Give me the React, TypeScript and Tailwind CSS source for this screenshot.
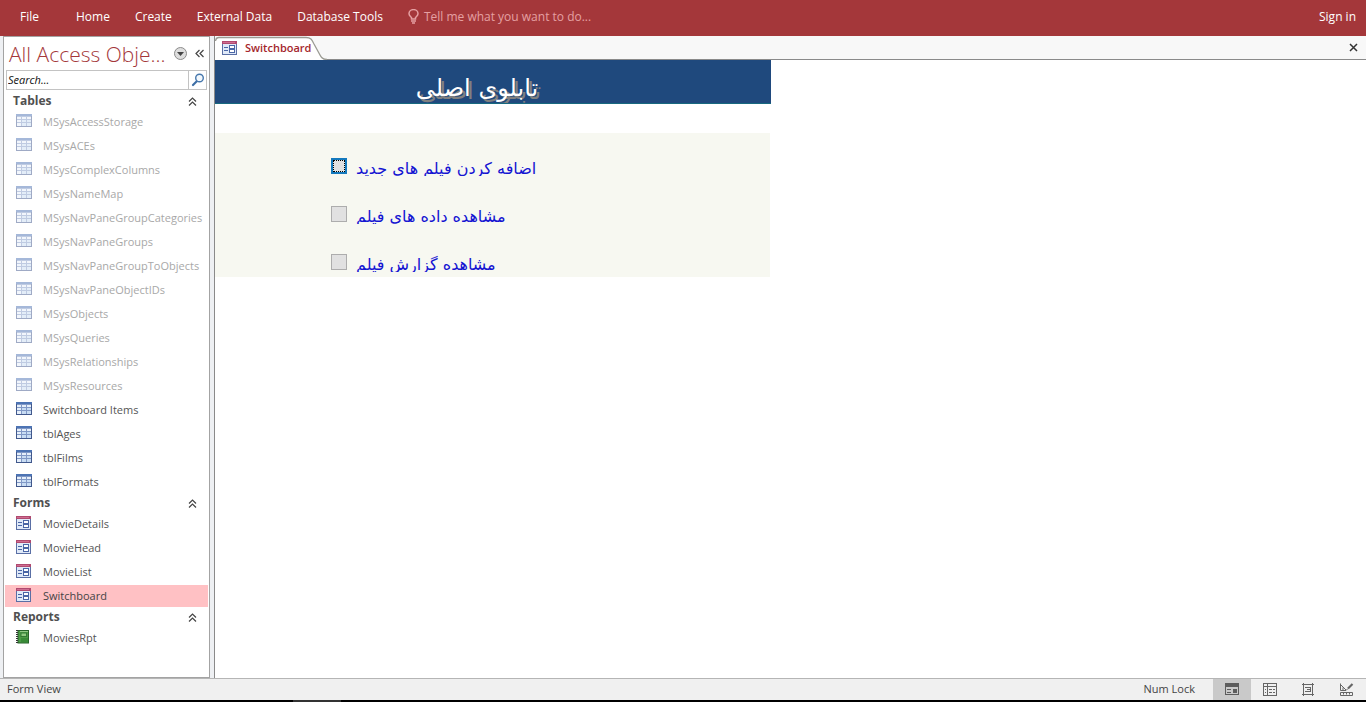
import React from "react";

const UI = "font-['Open_Sans','Noto_Sans',sans-serif]";

function TableIcon({ faded }: { faded?: boolean }) {
  return (
    <svg width="16" height="14" viewBox="0 0 16 14" shapeRendering="crispEdges" className={faded ? "opacity-50" : ""} aria-hidden="true">
      <rect width="16" height="13" fill="#41588c" />
      <rect y="0" width="16" height="2" fill="#4d74b4" />
      <rect x="1" y="2" width="14" height="10" fill="#8098c6" />
      <g fill="#e6effa">
        <rect x="1" y="3" width="4" height="2" />
        <rect x="6" y="3" width="4" height="2" />
        <rect x="11" y="3" width="4" height="2" />
        <rect x="1" y="6" width="4" height="2" />
        <rect x="1" y="9" width="4" height="3" />
      </g>
      <g fill="#c8dcf3">
        <rect x="6" y="6" width="4" height="2" />
        <rect x="11" y="6" width="4" height="2" />
        <rect x="6" y="9" width="4" height="3" />
        <rect x="11" y="9" width="4" height="3" />
      </g>
    </svg>
  );
}

function FormIcon() {
  return (
    <svg width="15" height="14" viewBox="0 0 15 14" shapeRendering="crispEdges" aria-hidden="true">
      <rect width="15" height="14" fill="#5a6fa5" />
      <rect x="1" y="3" width="13" height="10" fill="#dfe9f8" />
      <rect width="15" height="3" fill="#b04a70" />
      <rect x="1" y="1" width="12" height="1" fill="#cf6c90" />
      <g fill="#4a66a6">
        <rect x="2" y="6" width="4" height="1" />
        <rect x="2" y="9" width="4" height="1" />
        <rect x="7" y="4" width="6" height="4" />
        <rect x="7" y="8" width="6" height="4" />
      </g>
      <rect x="8" y="5" width="4" height="2" fill="#fff" />
      <rect x="8" y="9" width="4" height="2" fill="#fff" />
    </svg>
  );
}

function ReportIcon() {
  return (
    <svg width="14" height="14" viewBox="0 0 14 14" aria-hidden="true">
      <rect x="2" y="0.5" width="10.500" height="12.500" fill="#4c9a45" stroke="#27652a" />
      <rect x="4" y="1" width="8" height="1" fill="#91c985" />
      <rect x="5" y="3" width="5.500" height="3.500" fill="#8fca80" stroke="#337a35" />
      <rect x="5" y="8" width="7" height="4" fill="#398b37" />
      <path d="M1 0V14" stroke="#333" strokeWidth="2" strokeDasharray="1 1" />
    </svg>
  );
}

function DoubleUp() {
  return (
    <svg width="9" height="9" viewBox="0 0 9 9" fill="none" stroke="#444" strokeWidth="1.2" aria-hidden="true">
      <path d="M1 4.500 4.500 1 8 4.500M1 8.500 4.500 5 8 8.500" />
    </svg>
  );
}

const tables = [
  "MSysAccessStorage", "MSysACEs", "MSysComplexColumns", "MSysNameMap", "MSysNavPaneGroupCategories",
  "MSysNavPaneGroups", "MSysNavPaneGroupToObjects", "MSysNavPaneObjectIDs", "MSysObjects", "MSysQueries",
  "MSysRelationships", "MSysResources", "Switchboard Items", "tblAges", "tblFilms", "tblFormats",
];

function Group({ title, children }: { title: string; children: React.ReactNode }) {
  return (
    <section>
      <h2>
        <button type="button" className="flex h-[18px] w-full items-center justify-between pl-2 pr-[11px] text-[12px] leading-[18px] font-bold text-[#505050]">
          {title}
          <DoubleUp />
        </button>
      </h2>
      <ul>{children}</ul>
    </section>
  );
}

function Item({ name, icon, faded, selected }: { name: string; icon: React.ReactNode; faded?: boolean; selected?: boolean }) {
  return (
    <li className="flex h-6 items-center">
      <button
        type="button"
        className={`flex h-[22px] w-full items-center gap-[11px] pl-[11px] text-left text-[11px] whitespace-nowrap ${
          selected ? "bg-[#ffc1c4] text-[#444]" : faded ? "text-[#a8a8a8]" : "text-[#555]"
        }`}
      >
        <span className="w-4 shrink-0 pb-[2px]">{icon}</span>
        {name}
      </button>
    </li>
  );
}

function NavPane() {
  return (
    <aside className="flex w-[207px] shrink-0 flex-col overflow-hidden border border-[#a3a3a3] bg-white px-px">
      <div className="flex h-[33px] shrink-0 items-center pl-1 pr-1">
        <h1 className="flex-1 text-[21px] leading-8 font-light whitespace-nowrap text-[#a4373a]">All Access Obje...</h1>
        <button type="button" aria-label="Navigation options" className="mr-2">
          <svg width="13" height="13" viewBox="0 0 13 13">
            <circle cx="6.500" cy="6.500" r="6" fill="#dedede" stroke="#8b8b8b" />
            <path d="M3 5h7l-3.500 4z" fill="#444" />
          </svg>
        </button>
        <button type="button" aria-label="Collapse pane">
          <svg width="9" height="9" viewBox="0 0 9 9" fill="none" stroke="#444" strokeWidth="1.200">
            <path d="M4.500 1 1 4.500 4.500 8M8.500 1 5 4.500 8.500 8" />
          </svg>
        </button>
      </div>
      <form className="mx-px mb-[2px] flex h-5 shrink-0 border border-[#c3c3c3]">
        <input type="text" aria-label="Search" placeholder="Search..." className="min-w-0 flex-1 px-px text-[11px] italic leading-4 outline-none placeholder:text-[#111]" />
        <button type="button" aria-label="Run search" className="flex w-[18px] items-center justify-center border-l border-[#c3c3c3]">
          <svg width="14" height="14" viewBox="0 0 14 14" fill="none">
            <path d="M6 8 2 12" stroke="#3c6da5" strokeWidth="2.200" strokeLinecap="round" />
            <circle cx="8.500" cy="5" r="3.800" fill="#f2f8fd" stroke="#4677ac" strokeWidth="1.400" />
          </svg>
        </button>
      </form>
      <Group title="Tables">
        {tables.map((t) => {
          const faded = t.startsWith("MSys");
          return <Item key={t} name={t} faded={faded} icon={<TableIcon faded={faded} />} />;
        })}
      </Group>
      <Group title="Forms">
        {["MovieDetails", "MovieHead", "MovieList", "Switchboard"].map((f) => (
          <Item key={f} name={f} selected={f === "Switchboard"} icon={<FormIcon />} />
        ))}
      </Group>
      <Group title="Reports">
        <Item name="MoviesRpt" icon={<ReportIcon />} />
      </Group>
    </aside>
  );
}

const options = ["اضافه کردن فیلم های جدید", "مشاهده داده های فیلم", "مشاهده گزارش فیلم"];

function Document() {
  return (
    <main className="flex min-w-0 flex-1 flex-col border-l border-[#8a8a8a] bg-white">
      <div className="flex h-6 shrink-0 items-stretch border-b border-[#8a8a8a] bg-[#f8f8f8]">
        <button type="button" className="relative -mb-px h-6 w-[112px]">
          <svg width="112" height="24" viewBox="0 0 112 24" className="absolute inset-0" aria-hidden="true">
            <path d="M0 24V5Q0 1.500 4 1.500H91C96 1.500 97 4 99 8L105 19Q107 23.500 110 23.500V24Z" fill="#fff" />
            <path d="M0.500 5Q1 1.500 4 1.500H91C96 1.500 97 4 99 8L105 19Q107 23.500 112 23.500" fill="none" stroke="#9b9b93" strokeWidth="1.300" />
          </svg>
          <span className="relative flex items-center gap-2 pl-[7px] text-[11px] font-semibold text-[#a4262c]">
            <FormIcon />
            Switchboard
          </span>
        </button>
        <button type="button" aria-label="Close" className="ml-auto px-2">
          <svg width="9" height="9" viewBox="0 0 9 9" stroke="#333" strokeWidth="1.500">
            <path d="M1 1 8 8M8 1 1 8" />
          </svg>
        </button>
      </div>
      <div className="w-full max-w-[556px]">
        <header className="flex h-11 justify-center overflow-hidden border-b border-[#17697f] bg-[#1f497d] pt-3 pr-8">
          <h2 dir="rtl" lang="fa" className="font-['DejaVu_Sans',sans-serif] text-[24px] leading-8 whitespace-nowrap text-white [text-shadow:3px_3px_0_#808080]">
            تابلوی اصلی
          </h2>
        </header>
        <div className="mt-[29px] mr-px flex h-36 flex-col bg-[#f7f8f1] pl-[116px]">
          {options.map((o, i) => (
            <div key={o} className="flex h-12 items-end pb-[5px]">
              <button
                type="button"
                id={`option-${i}`}
                aria-labelledby={`option-label-${i}`}
                className={`mb-[2px] size-4 shrink-0 bg-[#e1e1e1] ${i === 0 ? "border-2 border-[#1479bd] outline-1 -outline-offset-3 outline-dotted outline-black" : "border border-[#adadad]"}`}
              />
              <label id={`option-label-${i}`} htmlFor={`option-${i}`} dir="rtl" lang="fa" className="ml-[9px] h-5 overflow-hidden font-['DejaVu_Sans',sans-serif] text-[16px] leading-[26px] whitespace-nowrap text-[#1414d2]">
                {o}
              </label>
            </div>
          ))}
        </div>
      </div>
    </main>
  );
}

function StatusBar() {
  const view = "flex h-full w-[38px] items-center justify-center";
  return (
    <footer className="shrink-0">
      <div className="flex h-[22px] items-center border-t border-[#b5b5b5] bg-[#f0f0f0] pr-px pl-[7px] text-[11px] text-[#444]">
        <span>Form View</span>
        <span className="mr-[18px] ml-auto">Num Lock</span>
        <button type="button" aria-label="Form View" className={`${view} bg-[#c9c9c9]`}>
          <svg width="14" height="13" viewBox="0 0 14 13" fill="none" stroke="#5c5c5c" shapeRendering="crispEdges">
            <rect x="0.500" y="0.500" width="13" height="11" />
            <path d="M0 2h14" strokeWidth="4" />
            <path d="M2 6.500h4M2 9.500h4" strokeWidth="1" />
            <path d="M8 6.500h4M8 9h4" strokeWidth="2" />
          </svg>
        </button>
        <button type="button" aria-label="Datasheet View" className={view}>
          <svg width="14" height="13" viewBox="0 0 14 13" fill="none" stroke="#666" shapeRendering="crispEdges">
            <path d="M.5.5h13v12H.5zM0 3.500h14M4.500 0v13M2 6.500h1M2 9.500h1M6 6.500h3M10 6.500h2M6 9.500h3M10 9.500h2" />
          </svg>
        </button>
        <button type="button" aria-label="Layout View" className={view}>
          <svg width="12" height="13" viewBox="0 0 12 13" fill="none" stroke="#666" shapeRendering="crispEdges">
            <path d="M0 1.500h12M0 11.500h12M1.500 0v13M10.500 0v13M3 4.500h6M5 6.500h4M3 8.500h6M8.500 4v5" />
          </svg>
        </button>
        <button type="button" aria-label="Design View" className={view}>
          <svg width="15" height="14" viewBox="0 0 15 14" fill="none" stroke="#666">
            <path d="M1.500 0.500V7.500H7M1.500 1.500 7 7M4 4.500v3" />
            <path d="M13.500 1 9 5.500" strokeWidth="2.200" />
            <path d="M9 5.500 7 7.500" />
            <path d="M1.500 9.500h12v3h-12zM4.500 10v1.500M7.500 10v1.500M10.500 10v1.500" />
          </svg>
        </button>
      </div>
      <div className="flex h-[2px] bg-black pl-[293px]">
        <div className="w-12 bg-[#333]" />
      </div>
    </footer>
  );
}

export default function App() {
  return (
    <div className={`flex h-screen flex-col overflow-hidden bg-white ${UI}`}>
      <nav className="flex h-9 shrink-0 items-center bg-[#a4373a] pr-[10px] pb-[3px] pl-5 text-[12px] leading-4 whitespace-nowrap text-white">
        <a href="#file" className="mr-[37px]">File</a>
        <div className="flex items-center gap-[25px]">
          <a href="#home">Home</a>
          <a href="#create">Create</a>
          <a href="#external">External Data</a>
          <a href="#tools">Database Tools</a>
          <button type="button" className="flex items-center gap-[5px] text-[#e5a0a2]">
            <svg width="11" height="15" viewBox="0 0 11 15" fill="none" stroke="#e5a0a2" strokeWidth="1.500" aria-hidden="true">
              <path d="M3.500 10V8.500C2 7 1 6.500 1 4.800a4.500 4.200 0 0 1 9 0c0 1.700-1 2.200-2.500 3.700V10Z" />
              <path d="M3 12h5M4 14h3" />
            </svg>
            Tell me what you want to do...
          </button>
        </div>
        <a href="#signin" className="ml-auto">Sign in</a>
      </nav>
      <div className="flex min-h-0 flex-1 bg-[#eef0f3] pl-[3px]">
        <NavPane />
        <div className="w-1 shrink-0" />
        <Document />
      </div>
      <StatusBar />
    </div>
  );
}
